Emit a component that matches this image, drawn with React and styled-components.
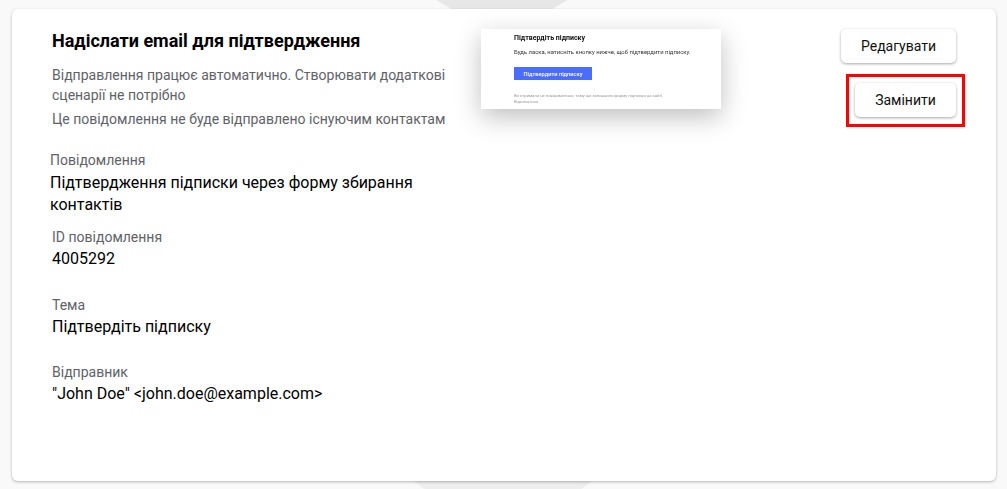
import React from 'react'
import styled, { createGlobalStyle } from 'styled-components'

const GlobalStyle = createGlobalStyle`
  html, body { margin: 0; padding: 0; background: #f9f9f9; }
  body { font-family: Roboto, "Liberation Sans", sans-serif; overflow: hidden; }
`

const Page = styled.div`
  position: relative;
  width: 1007px;
  height: 489px;
  box-sizing: border-box;
  padding: 9px 11px 8px 12px;
  overflow: hidden;

  &::before,
  &::after {
    content: '';
    position: absolute;
    border-radius: 50%;
  }
  &::before {
    left: 390px;
    top: -203px;
    width: 224px;
    height: 224px;
    background: #e8e7e7;
  }
  &::after {
    left: 358px;
    top: 222px;
    width: 290px;
    height: 290px;
    background: #eeeeee;
  }
`

const Card = styled.section`
  position: relative;
  z-index: 1;
  display: flex;
  height: 100%;
  box-sizing: border-box;
  padding: 20px 40px 0 40px;
  background: #fff;
  border-radius: 6px;
  box-shadow: 0 1px 3px rgba(0, 0, 0, 0.28);
`

const Info = styled.div`
  width: 401px;
  flex-shrink: 0;
`

const Title = styled.h2`
  margin: 0 0 12px;
  font-size: 18px;
  line-height: 24px;
  font-weight: 700;
  color: #000;
`

const Note = styled.p`
  margin: 0 0 ${p => p.$gap || 0}px;
  font-size: 14px;
  line-height: 20px;
  color: #5f6368;
`

const Field = styled.div`
  margin-top: ${p => p.$top}px;
  margin-left: ${p => p.$shift || 0}px;
`

const Label = styled.div`
  font-size: 14px;
  line-height: 20px;
  color: #5f6368;
`

const Value = styled.div`
  margin-top: ${p => p.$gap || 1}px;
  font-size: 16px;
  line-height: 22px;
  color: #000;
`

const Preview = styled.div`
  width: 240px;
  height: 80px;
  margin-left: 28px;
  flex-shrink: 0;
  box-sizing: border-box;
  padding: 5px 0 0 33px;
  background: #fff;
  box-shadow: 0 8px 24px rgba(0, 0, 0, 0.25);
  overflow: hidden;
`

const PreviewBody = styled.div`
  filter: blur(0.3px);
`

const PreviewTitle = styled.div`
  font-size: 7px;
  line-height: 9px;
  font-weight: 700;
  color: #111;
`

const PreviewText = styled.div`
  margin-top: 5px;
  font-size: 5.9px;
  line-height: 8px;
  color: #333;
  white-space: nowrap;
`

const PreviewButton = styled.div`
  display: flex;
  align-items: center;
  justify-content: center;
  width: 78px;
  height: 13px;
  margin-top: 11px;
  background: #4a6cff;
  color: #fff;
  font-size: 5.7px;
  font-weight: 500;
`

const PreviewFoot = styled.div`
  margin-top: 13px;
  font-size: 4.15px;
  line-height: 6px;
  color: #999;
  white-space: nowrap;
`

const Actions = styled.div`
  display: flex;
  flex-direction: column;
  align-items: flex-end;
  gap: 20px;
  margin-left: auto;
`

const Button = styled.button`
  position: relative;
  display: block;
  width: ${p => p.$width}px;
  height: 34px;
  padding: 0;
  border: 0;
  border-radius: 5px;
  background: #fff;
  box-shadow: 0 1px 3px rgba(0, 0, 0, 0.35);
  font-family: inherit;
  font-size: 14px;
  color: #111;
`

const Highlight = styled.span`
  position: absolute;
  inset: -9px -9px -10px -9px;
  border: 3px solid #f00;
  pointer-events: none;
`

export default function App() {
  return (
    <Page>
      <GlobalStyle />
      <Card>
        <Info>
          <Title>Надіслати email для підтвердження</Title>
          <Note $gap={4}>Відправлення працює автоматично. Створювати додаткові сценарії не потрібно</Note>
          <Note>Це повідомлення не буде відправлено існуючим контактам</Note>
          <Field $top={21} $shift={-2}>
            <Label>Повідомлення</Label>
            <Value $gap={2}>Підтвердження підписки через форму збирання контактів</Value>
          </Field>
          <Field $top={11}>
            <Label>ID повідомлення</Label>
            <Value>4005292</Value>
          </Field>
          <Field $top={25}>
            <Label>Тема</Label>
            <Value>Підтвердіть підписку</Value>
          </Field>
          <Field $top={24}>
            <Label>Відправник</Label>
            <Value>"John Doe" &lt;john.doe@example.com&gt;</Value>
          </Field>
        </Info>
        <Preview>
          <PreviewBody>
            <PreviewTitle>Підтвердіть підписку</PreviewTitle>
            <PreviewText>Будь ласка, натисніть кнопку нижче, щоб підтвердити підписку.</PreviewText>
            <PreviewButton>Підтвердити підписку</PreviewButton>
            <PreviewFoot>
              Ви отримали це повідомлення, тому що заповнили форму підписки на сайті.
              <br />
              Відписатися
            </PreviewFoot>
          </PreviewBody>
        </Preview>
        <Actions>
          <Button $width={115}>Редагувати</Button>
          <Button $width={101}>
            Замінити
            <Highlight />
          </Button>
        </Actions>
      </Card>
    </Page>
  )
}
